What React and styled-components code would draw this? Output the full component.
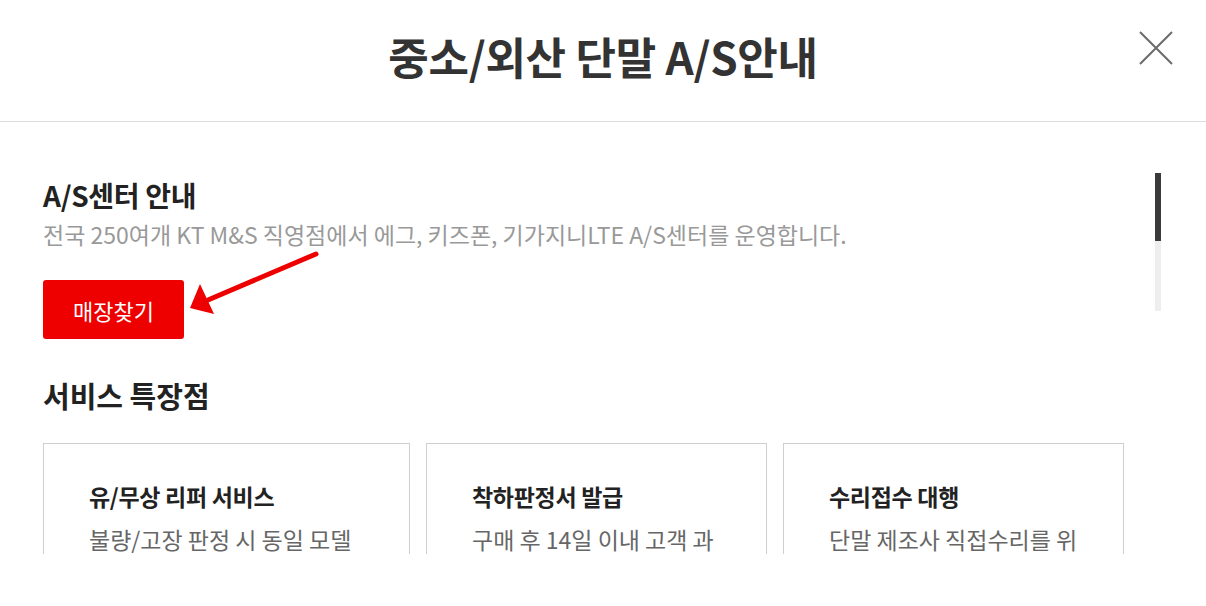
import styled, { createGlobalStyle } from "styled-components";

const GlobalStyle = createGlobalStyle`
  html, body {
    margin: 0;
    padding: 0;
    background: #fff;
  }
  body {
    font-family: "Noto Sans CJK KR", "Noto Sans", sans-serif;
    color: #222;
  }
`;

const features = [
  { title: "유/무상 리퍼 서비스", desc: "불량/고장 판정 시 동일 모델" },
  { title: "착하판정서 발급", desc: "구매 후 14일 이내 고객 과" },
  { title: "수리접수 대행", desc: "단말 제조사 직접수리를 위" },
];

function App() {
  return (
    <>
      <GlobalStyle />
      <Modal>
        <Header>
          <Title>중소/외산 단말 A/S안내</Title>
          <CloseButton aria-label="닫기">
            <svg width="34" height="34" viewBox="0 0 34 34">
              <path d="M1 1 L33 33 M33 1 L1 33" stroke="#6b6b6b" strokeWidth="2" fill="none" />
            </svg>
          </CloseButton>
        </Header>

        <Body>
          <Content>
            <SectionTitle>A/S센터 안내</SectionTitle>
            <Desc>
              전국 250여개 KT M&amp;S 직영점에서 에그, 키즈폰, 기가지니LTE A/S센터를 운영합니다.
            </Desc>
            <RedButton>매장찾기</RedButton>

            <SubTitle>서비스 특장점</SubTitle>
            <Cards>
              {features.map((f) => (
                <Card key={f.title}>
                  <CardTitle>{f.title}</CardTitle>
                  <CardDesc>{f.desc}</CardDesc>
                </Card>
              ))}
            </Cards>
          </Content>
          <ScrollTrack>
            <ScrollThumb />
          </ScrollTrack>
          {/* 안내용 화살표 */}
          <Arrow width="140" height="70" viewBox="0 0 140 70">
            <path d="M128 4 L20 50" stroke="#ee0000" strokeWidth="5" strokeLinecap="round" />
            <path d="M2 58 L12 34 L26 64 Z" fill="#ee0000" />
          </Arrow>
        </Body>
      </Modal>
    </>
  );
}

const Modal = styled.div`
  width: 1206px;
  height: 606px;
  background: #fff;
`;

const Header = styled.header`
  position: relative;
  height: 121px;
  border-bottom: 1px solid #dcdcdc;
  display: flex;
  align-items: center;
  justify-content: center;
`;

const Title = styled.h1`
  margin: 0 0 10px;
  font-size: 44px;
  line-height: 56px;
  font-weight: 700;
  color: #333;
  letter-spacing: -0.3px;
`;

const CloseButton = styled.button`
  position: absolute;
  right: 33px;
  top: 31px;
  padding: 0;
  border: 0;
  background: none;
  cursor: pointer;
  line-height: 0;
`;

const Body = styled.div`
  position: relative;
  height: 432px;
  display: flex;
  overflow: hidden;
`;

const Content = styled.div`
  flex: 1;
  padding: 55px 0 0 43px;
`;

const SectionTitle = styled.h2`
  margin: 0;
  font-size: 28px;
  font-weight: 700;
  color: #222;
  line-height: 36px;
  letter-spacing: -0.3px;
`;

const Desc = styled.p`
  margin: 5px 0 0;
  font-size: 23px;
  color: #999;
  line-height: 32px;
`;

const RedButton = styled.button`
  display: block;
  margin-top: 30px;
  width: 141px;
  height: 59px;
  border: 0;
  border-radius: 3px;
  background: #ee0000;
  color: #fff;
  font-family: inherit;
  font-size: 22px;
  font-weight: 400;
  cursor: pointer;
`;

const SubTitle = styled.h3`
  margin: 37px 0 0;
  font-size: 29px;
  font-weight: 700;
  color: #222;
  line-height: 38px;
`;

const Cards = styled.div`
  display: grid;
  grid-template-columns: 367px 341px 341px;
  gap: 16px;
  margin-top: 29px;
`;

const Card = styled.div`
  border: 1px solid #cfcfcf;
  padding: 36px 20px 40px 45px;
  height: 200px;
`;

const CardTitle = styled.h4`
  margin: 0;
  font-size: 23px;
  font-weight: 700;
  color: #222;
  line-height: 32px;
  letter-spacing: -0.3px;
`;

const CardDesc = styled.p`
  margin: 11px 0 0;
  font-size: 23px;
  color: #666;
  line-height: 32px;
`;

const ScrollTrack = styled.div`
  width: 6px;
  height: 138px;
  margin: 51px 45px 0 0;
  background: #eeeeee;
`;

const ScrollThumb = styled.div`
  height: 68px;
  background: #3a3a3a;
`;

const Arrow = styled.svg`
  position: absolute;
  left: 188px;
  top: 128px;
`;

export default App;
